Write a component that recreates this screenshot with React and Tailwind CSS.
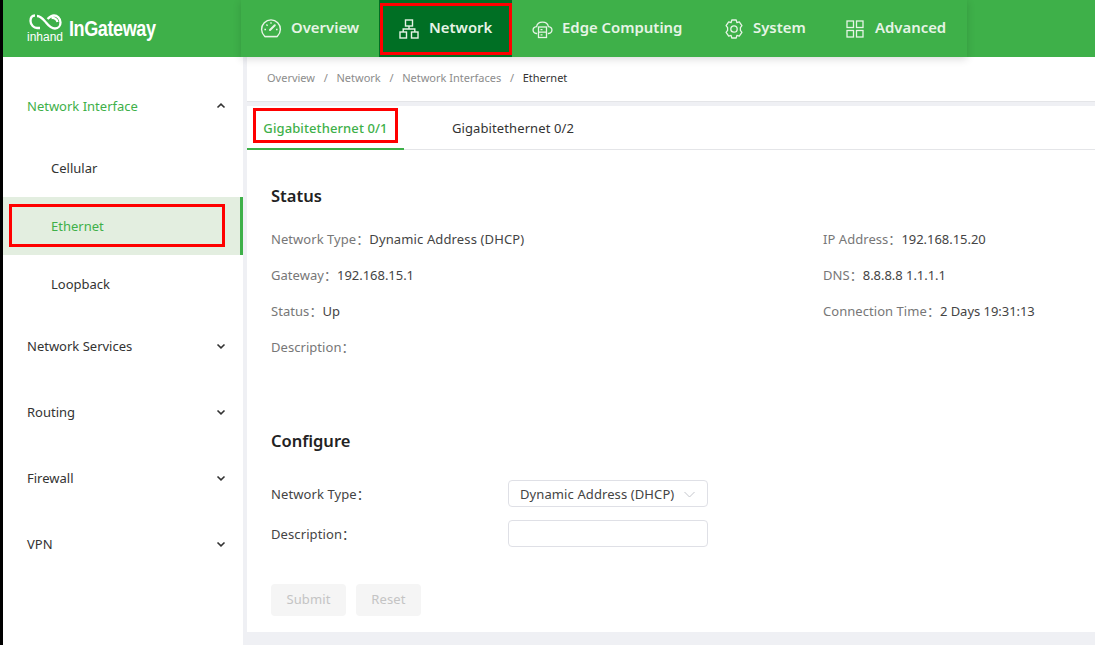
import React from "react";

function Chevron({ up }) {
  return (
    <svg width="10" height="10" viewBox="0 0 10 10" className="absolute right-[17px] top-1/2 -translate-y-1/2">
      <path d={up ? "M1.5 6.5 L5 3.2 L8.5 6.5" : "M1.5 3.5 L5 6.8 L8.5 3.5"} fill="none" stroke="#333" strokeWidth="1.6" />
    </svg>
  );
}

function Gauge() {
  return (
    <svg width="22" height="22" viewBox="0 0 22 22" fill="none" stroke="#e6f4e6" strokeWidth="1.4">
      <path d="M4.6 18.2 A9.4 9.4 0 1 1 17.4 18.2" strokeLinecap="round" />
      <path d="M4.6 18.6 H17.4" strokeWidth="1.6" />
      <path d="M10 12 L14.8 7.2" strokeWidth="2" strokeLinecap="round" />
      <path d="M4.4 11.5 H6 M6.4 6.6 L7.6 7.8 M11 4.2 V5.8 M16 11.5 H17.6" />
    </svg>
  );
}

function NetIcon() {
  return (
    <svg width="20" height="20" viewBox="0 0 20 20" fill="none" stroke="#e6f4e6" strokeWidth="1.4">
      <rect x="6.5" y="1" width="7" height="6" />
      <rect x="1" y="13" width="6.5" height="6" />
      <rect x="12.5" y="13" width="6.5" height="6" />
      <path d="M10 7 V10 M4.2 13 V10 H15.8 V13" />
    </svg>
  );
}

function EdgeIcon() {
  return (
    <svg width="21" height="20" viewBox="0 0 21 20" fill="none" stroke="#e6f4e6" strokeWidth="1.3">
      <path d="M5.2 14.5 H4.5 C0 14 -0.2 8.2 4.6 7.6 C5.6 1.8 15.2 1.4 16.4 7.6 C21.2 8.2 21 14 16.5 14.5 H15.8" />
      <rect x="6.5" y="8" width="8" height="10.5" />
      <path d="M6.5 13.2 H14.5 M8.5 10.6 H10.5 M8.5 15.8 H10.5" />
    </svg>
  );
}

function GearIcon() {
  return (
    <svg width="20" height="20" viewBox="0 0 20 20" fill="none" stroke="#e6f4e6" strokeWidth="1.3" strokeLinejoin="round">
      <path d="M7.8 1 H12.2 L12.9 3.7 L15.3 2.9 L17.9 6.6 L16.4 8.6 L16.4 11.4 L17.9 13.4 L15.3 17.1 L12.9 16.3 L12.2 19 H7.8 L7.1 16.3 L4.7 17.1 L2.1 13.4 L3.6 11.4 L3.6 8.6 L2.1 6.6 L4.7 2.9 L7.1 3.7 Z" />
      <circle cx="10" cy="10" r="3.2" />
    </svg>
  );
}

function GridIcon() {
  return (
    <svg width="18" height="18" viewBox="0 0 18 18" fill="none" stroke="#e6f4e6" strokeWidth="1.3">
      <rect x="1" y="1" width="6.5" height="6.5" />
      <rect x="10.5" y="1" width="6.5" height="6.5" />
      <rect x="1" y="10.5" width="6.5" height="6.5" />
      <rect x="10.5" y="10.5" width="6.5" height="6.5" />
    </svg>
  );
}

function LogoMark() {
  return (
    <svg width="37" height="30" viewBox="0 0 37 30" fill="none" className="shrink-0">
      <path
        d="M8 1.5 C5 1.5 3.5 4 3.5 7 C3.5 11 7 14 10 14 L13 14 M10 2 C14 2 17 6 19 8.5 C21 11 24 14.5 28 14.5 C31.5 14.5 33.5 11.5 33.5 8.5 C33.5 4 30 1.5 27 1.5 C24 1.5 22 3.5 20.5 5 M24.5 4 C27 3.5 30 5 30.5 8"
        stroke="#fff"
        strokeWidth="2.3"
      />
      <text x="0" y="27" fontFamily="'Liberation Sans', sans-serif" fontSize="12.5" fill="#fff" textLength="36" lengthAdjust="spacingAndGlyphs">inhand</text>
    </svg>
  );
}

const navItems = [
  { label: "Overview", icon: <Gauge />, w: "w-[138px]", gap: "gap-[9px]", pl: "pl-[19px]" },
  { label: "Network", icon: <NetIcon />, w: "w-[133px]", gap: "gap-[10px]", pl: "pl-[20px]", active: true },
  { label: "Edge Computing", icon: <EdgeIcon />, w: "w-[191px]", gap: "gap-[9px]", pl: "pl-[20px]" },
  { label: "System", icon: <GearIcon />, w: "w-[122px]", gap: "gap-[9px]", pl: "pl-[21px]" },
  { label: "Advanced", icon: <GridIcon />, w: "w-[142px]", gap: "gap-[11px]", pl: "pl-[21px]" },
];

function Nav() {
  return (
    <nav className="relative z-10 flex h-[57px] w-[726px] shadow-[0_2px_8px_rgba(0,0,0,0.15)]">
      {navItems.map((n) => (
        <div
          key={n.label}
          className={`relative flex h-full items-center ${n.w} ${n.gap} ${n.pl} ${n.active ? "bg-[#006f24]" : ""}`}
        >
          {n.icon}
          <span className="pb-[2px] text-[14.9px] font-semibold text-[#e6f4e6]">{n.label}</span>
          {n.active && (
            <div className="absolute left-[1px] top-[3px] h-[52px] w-[132px] border-[3px] border-[#ff0000]" />
          )}
        </div>
      ))}
    </nav>
  );
}

function SideTop({ label, h, up, green }) {
  return (
    <div className={`relative flex items-center pl-[24px] pt-[2px] ${h} ${green ? "text-[#3eb049]" : "text-[#333]"}`}>
      <span>{label}</span>
      <Chevron up={up} />
    </div>
  );
}

function SideSub({ label, active }) {
  return (
    <div
      className={`relative flex h-[58px] items-center pl-[48px] pt-[2px] ${
        active ? "border-r-[3px] border-[#3eb049] bg-[#e3eee0] text-[#3eb049]" : "text-[#333]"
      }`}
    >
      {label}
      {active && <div className="absolute left-[6px] top-[7px] h-[43px] w-[216px] border-[3px] border-[#ff0000]" />}
    </div>
  );
}

function Sidebar() {
  return (
    <aside className="w-[240px] shrink-0 bg-white pt-[20px] text-[13px]">
      <SideTop label="Network Interface" h="h-[58px]" up green />
      <div className="pt-[4px]">
        <SideSub label="Cellular" />
        <SideSub label="Ethernet" active />
        <SideSub label="Loopback" />
      </div>
      <div>
        <SideTop label="Network Services" h="h-[66px]" />
        <SideTop label="Routing" h="h-[66px]" />
        <SideTop label="Firewall" h="h-[66px]" />
        <SideTop label="VPN" h="h-[66px]" />
      </div>
    </aside>
  );
}

function Info({ k, v, num }) {
  return (
    <div className="h-[36px] whitespace-nowrap leading-[36px]">
      <span className="tracking-[0.05px] text-[#777]">{k}：</span>
      <span className={`text-[#444] ${num ? "tracking-[-0.04px]" : "tracking-[0.13px]"}`}>{v}</span>
    </div>
  );
}

function Main() {
  return (
    <main className="ml-[4px] flex flex-1 flex-col text-[13px]">
      <div className="flex h-[45px] items-center gap-[8.7px] border-b border-[#e4e5e8] bg-white pb-[2px] pl-[20px] text-[11px] text-[#8c8c8c]">
        <span>Overview</span><span>/</span>
        <span>Network</span><span>/</span>
        <span>Network Interfaces</span><span>/</span>
        <span className="text-[#333]">Ethernet</span>
      </div>
      <div className="mt-[4px] flex-1 bg-white">
        <div className="relative flex h-[44px] border-b border-[#e4e5e8] tracking-[0.1px]">
          <div className="relative flex h-[44px] w-[157px] items-center justify-center border-b-2 border-[#3eb049] pt-[3px] font-medium text-[#3eb049]">
            Gigabitethernet 0/1
            <div className="absolute left-[6px] top-[2px] h-[35px] w-[145px] border-[3px] border-[#ff0000]" />
          </div>
          <div className="flex items-center pl-[48px] pt-[3px] text-[#333]">Gigabitethernet 0/2</div>
        </div>
        <div className="pl-[24px]">
          <h2 className="mt-[31px] text-[16.5px] font-semibold leading-[30px] text-[#222]">Status</h2>
          <div className="mt-[10px] flex h-[144px]">
            <div className="w-[552px]">
              <Info k="Network Type" v="Dynamic Address (DHCP)" />
              <Info k="Gateway" v="192.168.15.1" num />
              <Info k="Status" v="Up" />
              <Info k="Description" v="" />
            </div>
            <div>
              <Info k="IP Address" v="192.168.15.20" num />
              <Info k="DNS" v="8.8.8.8 1.1.1.1" num />
              <Info k="Connection Time" v="2 Days 19:31:13" num />
            </div>
          </div>
          <h2 className="mt-[61px] text-[16.5px] font-semibold leading-[30px] text-[#222]">Configure</h2>
          <div className="mt-[24px] flex h-[27px] items-center tracking-[0.1px]">
            <label className="w-[237px] pt-[3px] text-[#444]">Network Type：</label>
            <div className="flex h-[27px] w-[200px] items-center justify-between rounded-[4px] border border-[#dfe0e6] pl-[11px] pr-[12px] pt-[2px] text-[#444]">
              <span>Dynamic Address (DHCP)</span>
              <svg width="11" height="7" viewBox="0 0 11 7" fill="none" stroke="#c4c6cc" strokeWidth="1">
                <path d="M0.5 1 L5.5 6 L10.5 1" />
              </svg>
            </div>
          </div>
          <div className="mt-[13px] flex h-[27px] items-center tracking-[0.1px]">
            <label className="w-[237px] pt-[3px] text-[#444]">Description：</label>
            <div className="h-[27px] w-[200px] rounded-[4px] border border-[#dfe0e6]" />
          </div>
          <div className="mt-[37px] flex gap-[10px] tracking-[0.13px]">
            <button className="h-[32px] w-[75px] rounded-[4px] bg-[#f5f5f5] text-[#c4c4c4]">Submit</button>
            <button className="h-[32px] w-[65px] rounded-[4px] bg-[#f5f5f5] text-[#c4c4c4]">Reset</button>
          </div>
        </div>
      </div>
      <div className="h-[13px]" />
    </main>
  );
}

export default function App() {
  return (
    <div className="flex h-[645px] w-[1095px] overflow-hidden bg-black font-['Noto_Sans','Noto_Sans_CJK_SC',sans-serif]">
      <div className="ml-[3px] flex flex-1 flex-col bg-[#eff0f4]">
        <header className="flex h-[57px] shrink-0 bg-[#3eb049]">
          <div className="flex w-[238px] items-center gap-[5px] pl-[24px]">
            <LogoMark />
            <span className="origin-left scale-x-[0.82] font-['Liberation_Sans',sans-serif] text-[22px] font-bold tracking-[-0.5px] text-white">InGateway</span>
          </div>
          <Nav />
        </header>
        <div className="flex min-h-0 flex-1">
          <Sidebar />
          <Main />
        </div>
      </div>
    </div>
  );
}
